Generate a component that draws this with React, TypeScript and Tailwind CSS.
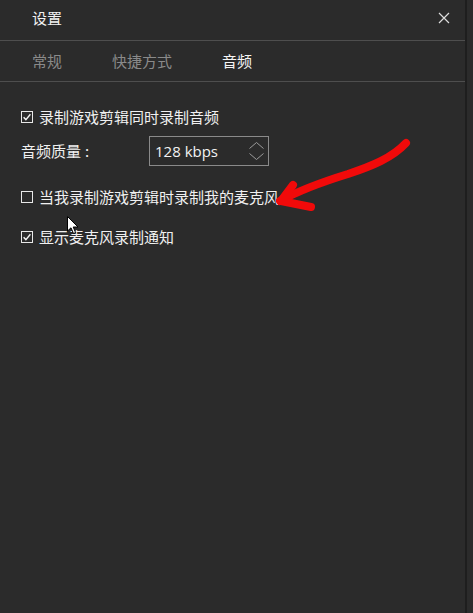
import React from "react";

const font = { fontFamily: '"Microsoft YaHei", "Noto Sans CJK SC", "Noto Sans", sans-serif' };

function CheckBox({ checked }: { checked: boolean }) {
  return (
    <svg width="12" height="12" viewBox="0 0 12 12" className="shrink-0">
      <rect x="0.5" y="0.5" width="11" height="11" fill="none" stroke="#e8e8e8" strokeWidth="1" />
      {checked && (
        <path d="M2.6 6.2 L4.9 8.6 L9.4 3.2" fill="none" stroke="#f2f2f2" strokeWidth="1.4" />
      )}
    </svg>
  );
}

function Row({ checked, text, className }: { checked: boolean; text: string; className: string }) {
  return (
    <div className={`flex items-center h-[20px] ${className}`}>
      <CheckBox checked={checked} />
      <span className="ml-[6px] text-[15px] leading-[20px] text-[#f0f0f0]">{text}</span>
    </div>
  );
}

export default function App() {
  return (
    <div className="w-[473px] h-[613px] bg-[#2b2b2b] relative overflow-hidden flex" style={font}>
      <div className="w-[467px] h-full flex flex-col border-r-2 border-[#1e1e1e]">
        <div className="h-[41px] flex items-center justify-between pl-[32px] pr-[15px] border-b border-[#4e4e4e]">
          <span className="text-[15px] text-[#f2f2f2] leading-[20px] -mt-[4px]">设置</span>
          <svg width="12" height="12" viewBox="0 0 12 12" className="-mt-[4px]">
            <path d="M1 1 L11 11 M11 1 L1 11" stroke="#dcdcdc" strokeWidth="1.2" />
          </svg>
        </div>
        <div className="h-[41px] flex items-center gap-[50px] pl-[32px] border-b border-[#4e4e4e]">
          <span className="text-[15px] leading-[20px] text-[#8a8a8a]">常规</span>
          <span className="text-[15px] leading-[20px] text-[#8a8a8a]">快捷方式</span>
          <span className="text-[15px] leading-[20px] text-[#f5f5f5]">音频</span>
        </div>
        <div className="flex flex-col pl-[21px]">
          <Row checked={true} text="录制游戏剪辑同时录制音频" className="mt-[25px]" />
          <div className="flex items-center mt-[9px] h-[30px]">
            <span className="w-[128px] flex text-[15px] leading-[20px] text-[#f0f0f0]">
              <span>音频质量</span>
              <span className="ml-[4px]">:</span>
            </span>
            <div className="w-[120px] h-[30px] border border-[#8a8a8a] flex items-center justify-between pl-[5px] pr-[3px]">
              <span className="text-[15px] text-[#f2f2f2] leading-[20px]" style={{ fontFamily: '"Open Sans", "Noto Sans", sans-serif' }}>128 kbps</span>
              <svg width="17" height="20" viewBox="0 0 17 20">
                <path d="M1.5 7.5 L8.5 1.5 L15.5 7.5" fill="none" stroke="#9a9a9a" strokeWidth="1" />
                <path d="M1.5 12.5 L8.5 18.5 L15.5 12.5" fill="none" stroke="#9a9a9a" strokeWidth="1" />
              </svg>
            </div>
          </div>
          <Row checked={false} text="当我录制游戏剪辑时录制我的麦克风" className="mt-[21px]" />
          <Row checked={true} text="显示麦克风录制通知" className="mt-[20px]" />
        </div>
      </div>

      {/* red hand-drawn arrow annotation */}
      <svg className="absolute left-0 top-0 pointer-events-none" width="473" height="613" viewBox="0 0 473 613">
        <path
          d="M406 143 C 392 158, 372 166, 348 174 C 322 182, 300 190, 280 201"
          fill="none"
          stroke="#f10a0a"
          strokeWidth="8"
          strokeLinecap="round"
        />
        <path d="M293 185 L281 201 L311 207" fill="none" stroke="#f10a0a" strokeWidth="8" strokeLinecap="round" strokeLinejoin="round" />
      </svg>

      {/* mouse cursor */}
      <svg className="absolute left-[67px] top-[216px] pointer-events-none" width="12" height="19" viewBox="0 0 12 19">
        <path d="M0.5 0.5 L0.5 15 L4 11.8 L6.5 17.5 L8.6 16.6 L6.2 11 L11 11 Z" fill="#ffffff" stroke="#000000" strokeWidth="1" />
      </svg>
    </div>
  );
}
